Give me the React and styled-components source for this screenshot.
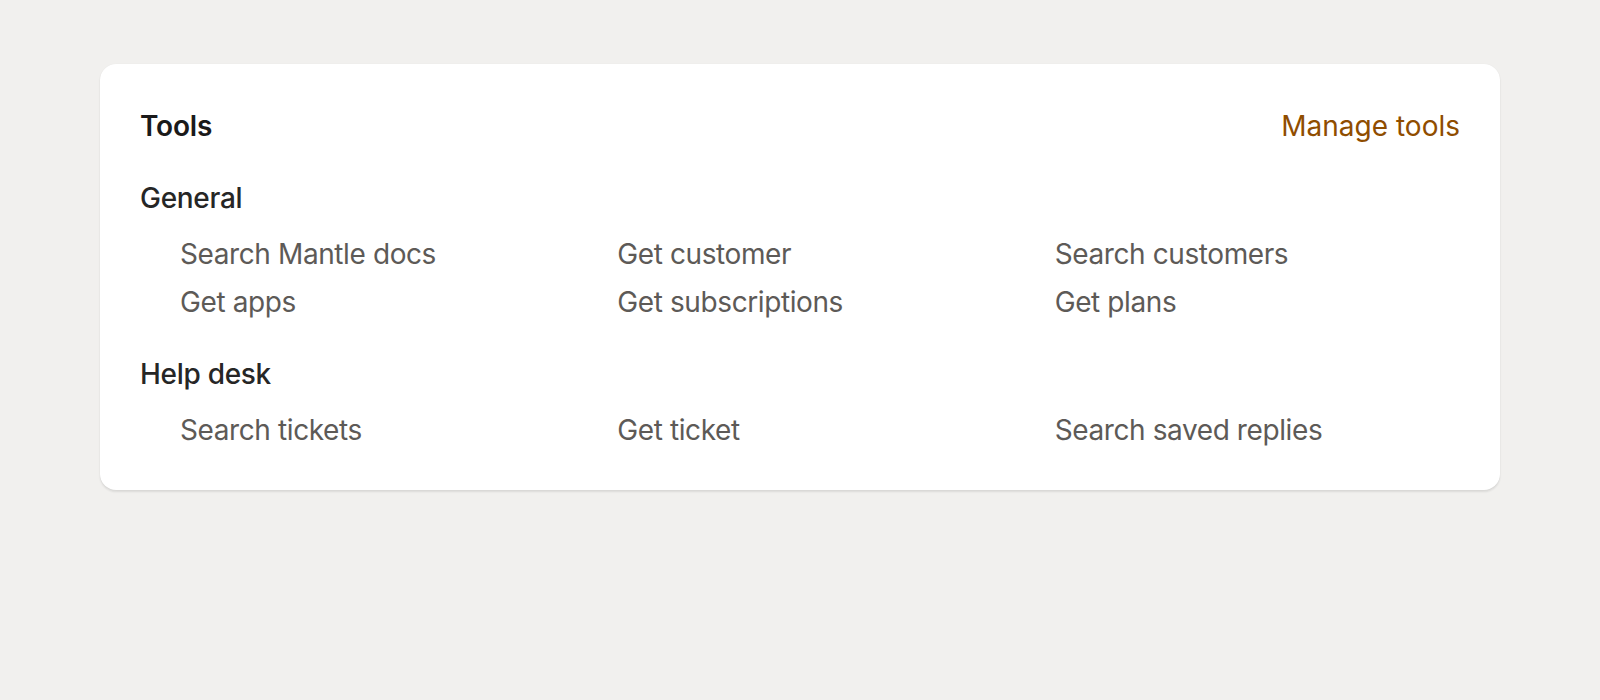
import React from 'react'
import styled, { createGlobalStyle } from 'styled-components'

const GlobalStyle = createGlobalStyle`
  html, body {
    margin: 0;
    padding: 0;
    background: #f1f0ee;
    font-family: Inter, "Noto Sans", "Liberation Sans", sans-serif;
    -webkit-font-smoothing: antialiased;
  }
`

const Page = styled.div`
  padding: 64px 100px;
`

const Card = styled.div`
  background: #fff;
  border-radius: 16px;
  padding: 42px 40px 40px;
  box-shadow: 0 2px 2px rgba(26, 26, 26, 0.1), 0 0 1px rgba(26, 26, 26, 0.08);
  display: flex;
  flex-direction: column;
  gap: 32px;
`

const Header = styled.div`
  display: flex;
  align-items: center;
  justify-content: space-between;
  height: 40px;
`

const Title = styled.h2`
  margin: 0;
  font-size: 28px;
  line-height: 40px;
  font-weight: 600;
  color: #1a1a1a;
  letter-spacing: -0.2px;
`

const ManageLink = styled.a`
  font-size: 28px;
  line-height: 40px;
  color: #8f4d00;
  text-decoration: none;
  cursor: pointer;
`

const Section = styled.section`
  display: flex;
  flex-direction: column;
  gap: 16px;
`

const SectionTitle = styled.h3`
  margin: 0;
  font-size: 28px;
  line-height: 40px;
  font-weight: 500;
  color: #262626;
  letter-spacing: -0.3px;
`

const ToolGrid = styled.ul`
  list-style: none;
  margin: 0;
  padding: 0 0 0 40px;
  display: grid;
  grid-template-columns: repeat(3, 1fr);
  column-gap: 32px;
  row-gap: 8px;
`

const ToolItem = styled.li`
  font-size: 28px;
  line-height: 40px;
  color: #5d5a57;
  letter-spacing: -0.4px;
`

const sections = [
  {
    title: 'General',
    tools: [
      'Search Mantle docs',
      'Get customer',
      'Search customers',
      'Get apps',
      'Get subscriptions',
      'Get plans',
    ],
  },
  {
    title: 'Help desk',
    tools: ['Search tickets', 'Get ticket', 'Search saved replies'],
  },
]

export default function App() {
  return (
    <Page>
      <GlobalStyle />
      <Card>
        <Header>
          <Title>Tools</Title>
          <ManageLink>Manage tools</ManageLink>
        </Header>
        {sections.map(section => (
          <Section key={section.title}>
            <SectionTitle>{section.title}</SectionTitle>
            <ToolGrid>
              {section.tools.map(tool => (
                <ToolItem key={tool}>{tool}</ToolItem>
              ))}
            </ToolGrid>
          </Section>
        ))}
      </Card>
    </Page>
  )
}
